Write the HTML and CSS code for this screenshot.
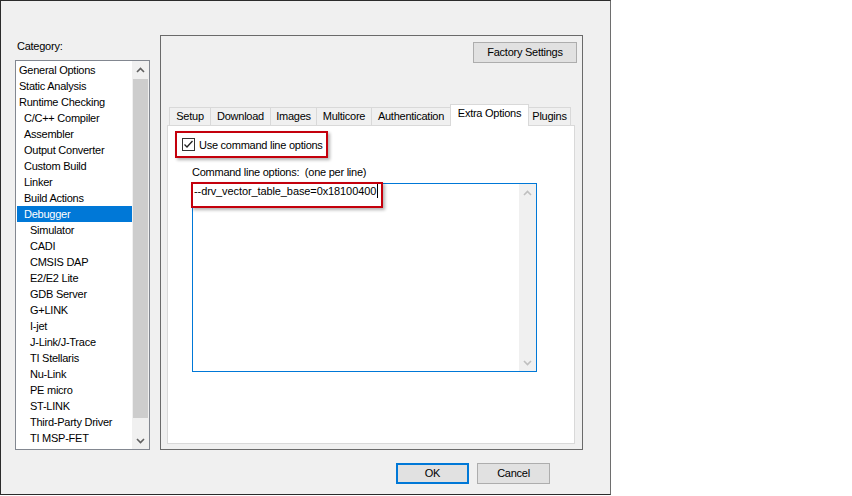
FILE: index.html
```html
<!DOCTYPE html>
<html lang="en">
<head>
  <meta charset="UTF-8" />
  <title>Options</title>
  <link rel="stylesheet" href="styles.css">
</head>
<body>

  <div class="dialog">
    <div class="dialog-body">

      <div class="category">
        <div class="category-label">Category:</div>
        <div class="listbox">
          <ul class="tree">
            <li>General Options</li>
            <li>Static Analysis</li>
            <li>Runtime Checking</li>
            <li class="sub">C/C++ Compiler</li>
            <li class="sub">Assembler</li>
            <li class="sub">Output Converter</li>
            <li class="sub">Custom Build</li>
            <li class="sub">Linker</li>
            <li class="sub">Build Actions</li>
            <li class="sub selected">Debugger</li>
            <li class="sub2">Simulator</li>
            <li class="sub2">CADI</li>
            <li class="sub2">CMSIS DAP</li>
            <li class="sub2">E2/E2 Lite</li>
            <li class="sub2">GDB Server</li>
            <li class="sub2">G+LINK</li>
            <li class="sub2">I-jet</li>
            <li class="sub2">J-Link/J-Trace</li>
            <li class="sub2">TI Stellaris</li>
            <li class="sub2">Nu-Link</li>
            <li class="sub2">PE micro</li>
            <li class="sub2">ST-LINK</li>
            <li class="sub2">Third-Party Driver</li>
            <li class="sub2">TI MSP-FET</li>
          </ul>
          <div class="vscroll">
            <div class="arrow">
              <svg width="9" height="6" viewBox="0 0 9 6"><path d="M1 5 4.5 1.5 8 5" fill="none" stroke="currentColor" stroke-width="1.6"/></svg>
            </div>
            <div class="track"><div class="thumb"></div></div>
            <div class="arrow">
              <svg width="9" height="6" viewBox="0 0 9 6"><path d="M1 1 4.5 4.5 8 1" fill="none" stroke="currentColor" stroke-width="1.6"/></svg>
            </div>
          </div>
        </div>
      </div>

      <div class="options-frame">
        <div class="frame-top">
          <button class="btn btn-factory">Factory Settings</button>
        </div>

        <div class="tabctl">
          <div class="tabs">
            <div class="tab tab-setup">Setup</div>
            <div class="tab tab-download">Download</div>
            <div class="tab tab-images">Images</div>
            <div class="tab tab-multicore">Multicore</div>
            <div class="tab tab-auth">Authentication</div>
            <div class="tab tab-extra active">Extra Options</div>
            <div class="tab tab-plugins">Plugins</div>
          </div>

          <div class="tab-page">
            <div class="mark check-row">
              <span class="checkbox">
                <svg width="11" height="11" viewBox="0 0 11 11"><path d="M1.5 5.5 4 8 9.5 2" fill="none" stroke="#222" stroke-width="1.3"/></svg>
              </span>
              <span>Use command line options</span>
            </div>

            <div class="cmd-label">Command line options:  (one per line)</div>

            <div class="cmd-box">
              <div class="cmd-text">--drv_vector_table_base=0x18100400<span class="caret"></span></div>
              <div class="vscroll disabled">
                <div class="arrow">
                  <svg width="9" height="6" viewBox="0 0 9 6"><path d="M1 5 4.5 1.5 8 5" fill="none" stroke="currentColor" stroke-width="1.6"/></svg>
                </div>
                <div class="track"></div>
                <div class="arrow">
                  <svg width="9" height="6" viewBox="0 0 9 6"><path d="M1 1 4.5 4.5 8 1" fill="none" stroke="currentColor" stroke-width="1.6"/></svg>
                </div>
              </div>
              <div class="mark mark-cmd"></div>
            </div>
          </div>
        </div>
      </div>

    </div>

    <div class="dialog-buttons">
      <button class="btn btn-dlg btn-default">OK</button>
      <button class="btn btn-dlg">Cancel</button>
    </div>
  </div>

</body>
</html>
```

FILE: styles.css
```css
body {
  margin: 0;
  background: #fff;
  font-family: 'Liberation Sans', Arial, sans-serif;
  font-size: 11px;
  letter-spacing: -0.25px;
  color: #000;
}

.dialog {
  box-sizing: border-box;
  width: 611px;
  height: 495px;
  background: #f0f0f0;
  border: 1px solid #2b2b2b;
  border-right-color: #6e6e6e;
}

.dialog-body {
  display: flex;
  align-items: flex-end;
  gap: 10px;
  padding: 34px 0 0 14px;
}

/* left column: category tree */
.category {
  display: flex;
  flex-direction: column;
}

.category-label {
  line-height: 14px;
  margin: 0 0 7px 2px;
}

.listbox {
  box-sizing: border-box;
  width: 135px;
  height: 390px;
  display: flex;
  background: #fff;
  border: 1px solid #828790;
}

.tree {
  flex: 1;
  list-style: none;
  margin: 0;
  padding: 1px 0 0 1px;
}

.tree li {
  height: 16px;
  line-height: 16px;
  padding-left: 2px;
  white-space: nowrap;
}

.tree .sub {
  padding-left: 7px;
}

.tree .sub2 {
  padding-left: 13px;
}

.tree .selected {
  background: #0078d7;
  color: #fff;
}

.vscroll {
  width: 17px;
  display: flex;
  flex-direction: column;
  background: #f0f0f0;
  color: #606060;
}

.vscroll .arrow {
  height: 17px;
  display: flex;
  align-items: center;
  justify-content: center;
}

.vscroll .track {
  flex: 1;
}

.vscroll .thumb {
  height: 339px;
  margin: 1px 1px 0;
  background: #cdcdcd;
}

.vscroll.disabled {
  color: #bfbfbf;
}

/* right side: options frame */
.options-frame {
  box-sizing: border-box;
  width: 423px;
  height: 415px;
  border: 1px solid #6a6a6a;
  padding: 6px 5px 5px 6px;
  display: flex;
  flex-direction: column;
}

.frame-top {
  display: flex;
  justify-content: flex-end;
}

.btn {
  box-sizing: border-box;
  height: 21px;
  padding: 0;
  font: inherit;
  letter-spacing: inherit;
  line-height: 19px;
  color: #000;
  background: #e1e1e1;
  border: 1px solid #adadad;
}

.btn-factory {
  width: 104px;
}

.tabctl {
  margin: auto 2px 0 0;
}

.tabs {
  display: flex;
  align-items: flex-end;
  height: 21px;
  padding-left: 2px;
}

.tab {
  box-sizing: border-box;
  height: 18px;
  line-height: 17px;
  text-align: center;
  white-space: nowrap;
  background: #f0f0f0;
  border-top: 1px solid #d9d9d9;
  border-left: 1px solid #d9d9d9;
}

.tab.active {
  position: relative;
  z-index: 1;
  height: 22px;
  margin-bottom: -1px;
  background: #fff;
  border-right: 1px solid #d9d9d9;
}

.tab-setup { width: 41px; }
.tab-download { width: 60px; }
.tab-images { width: 46px; }
.tab-multicore { width: 55px; }
.tab-auth { width: 79px; }
.tab-extra { width: 79px; }

.tab-plugins {
  width: 42px;
  border-left: none;
  border-right: 1px solid #d9d9d9;
}

.tab-page {
  box-sizing: border-box;
  height: 319px;
  padding: 5px 0 0 7px;
  background: #fff;
  border: 1px solid #d9d9d9;
}

.mark {
  box-sizing: border-box;
  border: 2px solid #c4000c;
  box-shadow: 2px 2px 3px rgba(0, 0, 0, 0.3);
}

.check-row {
  width: 153px;
  height: 27px;
  display: flex;
  align-items: center;
  gap: 4px;
  padding-left: 5px;
  line-height: 14px;
}

.checkbox {
  box-sizing: border-box;
  width: 13px;
  height: 13px;
  display: flex;
  align-items: center;
  justify-content: center;
  background: #fff;
  border: 1px solid #333;
}

.cmd-label {
  margin: 7px 0 0 17px;
  line-height: 14px;
  white-space: pre;
}

.cmd-box {
  position: relative;
  box-sizing: border-box;
  width: 345px;
  height: 189px;
  margin: 4px 0 0 17px;
  display: flex;
  border: 1px solid #0078d7;
}

.cmd-text {
  flex: 1;
  padding-left: 1px;
  line-height: 14px;
  letter-spacing: -0.1px;
  white-space: nowrap;
}

.caret {
  display: inline-block;
  width: 1px;
  height: 14px;
  margin-left: 1px;
  vertical-align: top;
  background: #000;
}

.mark-cmd {
  position: absolute;
  left: -2px;
  top: -2px;
  width: 192px;
  height: 26px;
}

/* OK / Cancel */
.dialog-buttons {
  display: flex;
  justify-content: flex-end;
  gap: 8px;
  margin-top: 13px;
  padding-right: 60px;
}

.btn-dlg {
  width: 73px;
}

.btn-default {
  border: 2px solid #0078d7;
  line-height: 17px;
}
```
